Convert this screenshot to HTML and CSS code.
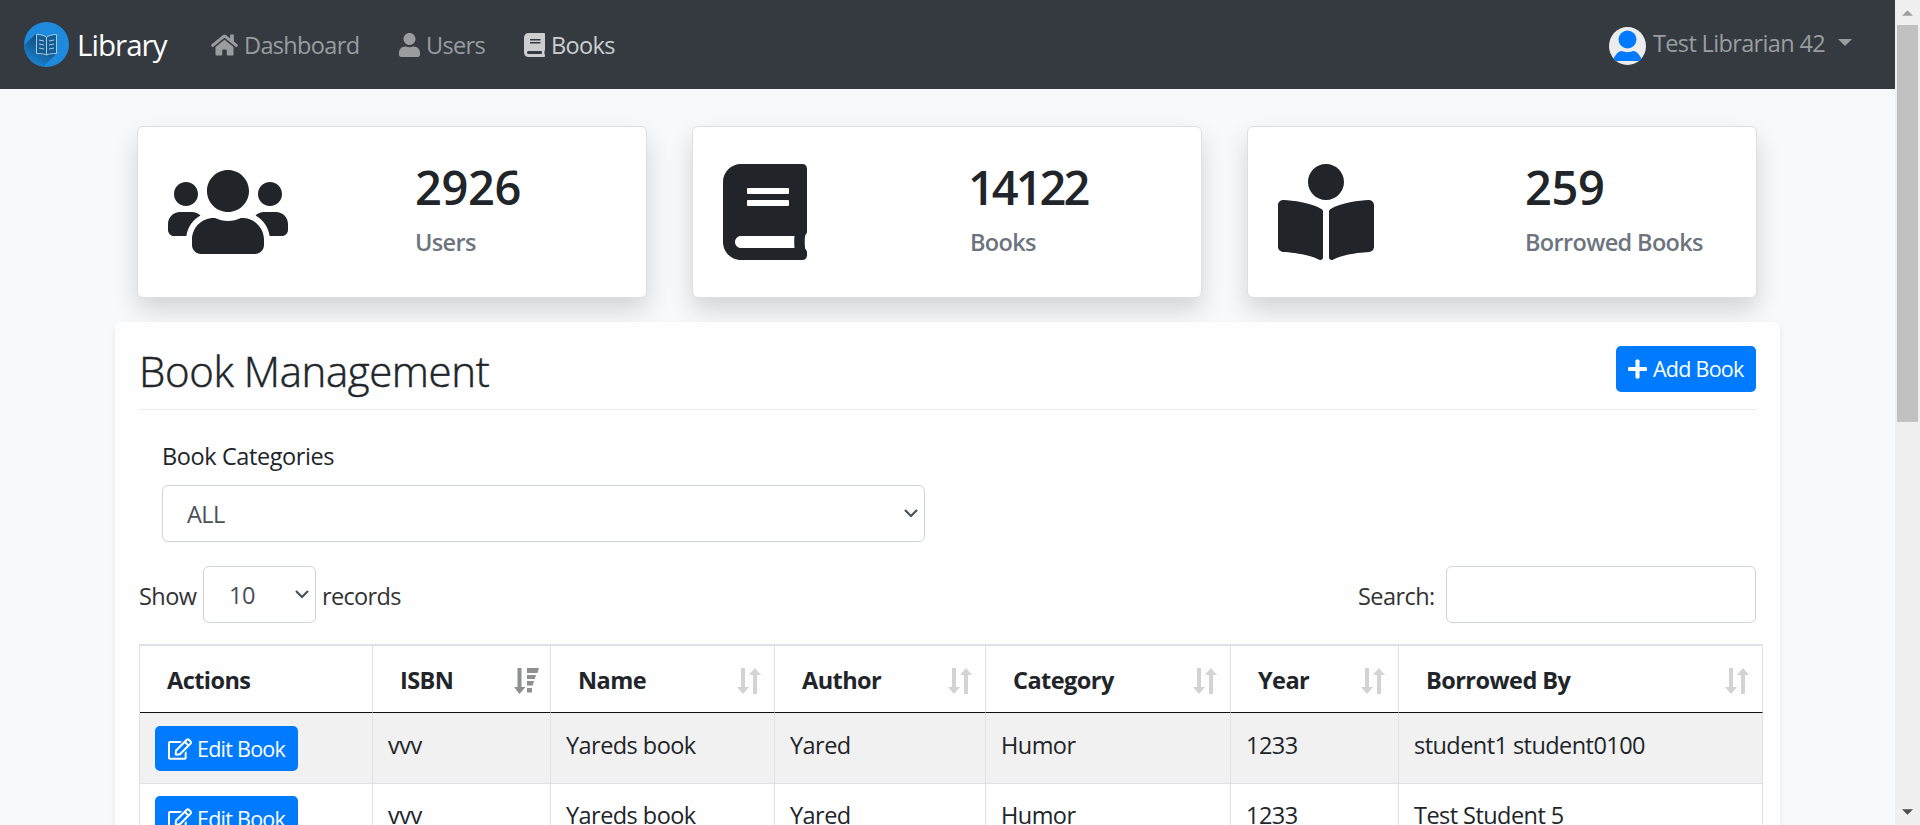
FILE: index.html
```html
<!DOCTYPE html>
<html lang="en">
<head>
<meta charset="utf-8">
<title>Library - Book Management</title>
<link rel="stylesheet" href="styles.css">
</head>
<body>
<svg class="defs" width="0" height="0" aria-hidden="true">
  <symbol id="book" viewBox="0 0 448 512"><path d="M448 360V24c0-13.300-10.700-24-24-24H96C43 0 0 43 0 96v320c0 53 43 96 96 96h328c13.300 0 24-10.700 24-24v-16c0-7.500-3.500-14.300-8.900-18.700-4.200-15.400-4.200-59.300 0-74.700 5.400-4.300 8.900-11.100 8.900-18.600zM128 134c0-3.300 2.700-6 6-6h212c3.300 0 6 2.700 6 6v20c0 3.300-2.700 6-6 6H134c-3.300 0-6-2.700-6-6v-20zm0 64c0-3.300 2.700-6 6-6h212c3.300 0 6 2.700 6 6v20c0 3.300-2.700 6-6 6H134c-3.300 0-6-2.700-6-6v-20zm253.400 250H96c-17.700 0-32-14.300-32-32 0-17.600 14.400-32 32-32h285.400c-1.900 17.100-1.900 46.900 0 64z"/></symbol>
  <symbol id="user" viewBox="0 0 448 512"><path d="M224 256c70.700 0 128-57.300 128-128S294.700 0 224 0 96 57.300 96 128s57.300 128 128 128zm89.600 32h-16.700c-22.200 10.200-46.900 16-72.900 16s-50.600-5.800-72.900-16h-16.700C60.200 288 0 348.200 0 422.400V464c0 26.500 21.500 48 48 48h352c26.500 0 48-21.500 48-48v-41.600c0-74.200-60.200-134.400-134.400-134.400z"/></symbol>
  <symbol id="home" viewBox="0 0 576 512"><path d="M280.370 148.260L96 300.110V464a16 16 0 0 0 16 16l112.060-.29a16 16 0 0 0 15.920-16V368a16 16 0 0 1 16-16h64a16 16 0 0 1 16 16v95.640a16 16 0 0 0 16 16.050L464 480a16 16 0 0 0 16-16V300L295.670 148.260a12.190 12.190 0 0 0-15.300 0zM571.600 251.470L488 182.560V44.050a12 12 0 0 0-12-12h-56a12 12 0 0 0-12 12v72.610L318.470 43a48 48 0 0 0-61 0L4.340 251.470a12 12 0 0 0-1.600 16.900l25.500 31A12 12 0 0 0 45.150 301l235.220-193.740a12.190 12.190 0 0 1 15.300 0L530.900 301a12 12 0 0 0 16.900-1.600l25.500-31a12 12 0 0 0-1.700-16.930z"/></symbol>
  <symbol id="users" viewBox="0 0 640 512"><path d="M96 224c35.300 0 64-28.700 64-64s-28.700-64-64-64-64 28.700-64 64 28.700 64 64 64zm448 0c35.300 0 64-28.700 64-64s-28.700-64-64-64-64 28.700-64 64 28.700 64 64 64zm32 32h-64c-17.600 0-33.500 7.100-45.100 18.600 40.300 22.100 68.900 62 75.100 109.400h66c17.700 0 32-14.300 32-32v-32c0-35.300-28.700-64-64-64zm-256 0c61.900 0 112-50.100 112-112S381.900 32 320 32 208 82.100 208 144s50.100 112 112 112zm76.800 32h-8.300c-20.800 10-43.900 16-68.500 16s-47.600-6-68.500-16h-8.300C179.600 288 128 339.600 128 403.200V432c0 26.500 21.500 48 48 48h288c26.500 0 48-21.500 48-48v-28.800c0-63.600-51.600-115.200-115.200-115.200zm-223.700-13.400C161.500 263.100 145.600 256 128 256H64c-35.300 0-64 28.700-64 64v32c0 17.700 14.300 32 32 32h65.900c6.300-47.400 34.900-87.300 75.200-109.400z"/></symbol>
  <symbol id="reader" viewBox="0 0 512 512"><path d="M352 96c0-53.020-42.980-96-96-96s-96 42.980-96 96 42.980 96 96 96 96-42.980 96-96zM233.590 241.100c-59.330-36.320-155.430-46.300-203.790-49.050C13.550 191.130 0 203.510 0 219.140v222.800c0 14.330 11.590 26.280 26.490 27.050 43.660 2.290 131.990 10.680 193.040 41.430 9.370 4.720 20.480-1.710 20.480-11.870V252.560c-.01-4.670-2.320-8.950-6.420-11.460zm248.610-49.050c-48.350 2.740-144.460 12.730-203.780 49.050-4.100 2.510-6.410 6.960-6.410 11.630v245.790c0 10.190 11.140 16.630 20.540 11.900 61.040-30.720 149.320-39.110 192.970-41.400 14.900-.78 26.490-12.730 26.490-27.060V219.140c-.01-15.630-13.560-28.010-29.810-27.090z"/></symbol>
  <symbol id="edit" viewBox="0 0 576 512"><path d="M402.300 344.900l32-32c5-5 13.700-1.500 13.700 5.700V464c0 26.500-21.500 48-48 48H48c-26.500 0-48-21.500-48-48V112c0-26.500 21.500-48 48-48h273.500c7.100 0 10.700 8.600 5.700 13.700l-32 32c-1.500 1.500-3.500 2.300-5.700 2.300H48v352h352V350.500c0-2.100.8-4.100 2.300-5.600zm156.600-201.800L296.300 405.700l-90.400 10c-26.200 2.900-48.500-19.200-45.600-45.600l10-90.400L432.900 17.100c22.900-22.900 59.900-22.900 82.700 0l43.200 43.200c22.900 22.900 22.900 60 .1 82.800zM460.100 174L402 115.900 216.200 301.800l-7.300 65.300 65.300-7.300L460.100 174zm64.800-79.700l-43.200-43.200c-4.100-4.100-10.800-4.100-14.800 0L436 82l58.100 58.100 30.900-30.900c4-4.200 4-10.800-.1-14.900z"/></symbol>
  <symbol id="plus" viewBox="0 0 448 512"><path d="M416 208H272V64c0-17.670-14.330-32-32-32h-32c-17.670 0-32 14.330-32 32v144H32c-17.670 0-32 14.330-32 32v32c0 17.670 14.330 32 32 32h144v144c0 17.670 14.330 32 32 32h32c17.670 0 32-14.330 32-32V304h144c17.670 0 32-14.330 32-32v-32c0-17.670-14.330-32-32-32z"/></symbol>
  <symbol id="sort" viewBox="0 0 24 26"><path d="M4 0h4v19h4L6 26 0 19h4zM16 26h4V7h4L18 0l-6 7h4z"/></symbol>
  <symbol id="sorted" viewBox="0 0 25 26"><path d="M3.500 0h4v19h4l-6 7-5.500-7h3.500zM13 0h12l-1.500 5H13zM13 7h9l-1.200 4H13zM13 13h7l-1.200 4.500H13zM13 20h5v4.500h-5z"/></symbol>
</svg>
<div class="window">
  <div class="page">
    <nav class="navbar">
      <a class="brand">
        <svg class="logo" viewBox="0 0 45 45">
          <defs><clipPath id="disc"><circle cx="22.500" cy="22.500" r="22.500"/></clipPath>
          <linearGradient id="cast" x1="0.700" y1="0.200" x2="0.300" y2="0.900"><stop offset="0" stop-color="#0f4a78"/><stop offset="1" stop-color="#1b83d0"/></linearGradient></defs>
          <circle cx="22.500" cy="22.500" r="22.500" fill="#1e8add"/>
          <path clip-path="url(#disc)" fill="url(#cast)" d="M12 12L33 31 18 46H0V23z"/>
          <path fill="#155c93" d="M12 12l10.500 3L33 12v19.500l-10.500 2-10.500-2z"/>
          <path fill="none" stroke="#a9cbe6" stroke-width="1" d="M12.500 12.500c5 0 8 1 10 3 2-2 5-3 10-3v19c-5 0-8 .5-10 1.500-2-1-5-1.500-10-1.500zM22.500 15.500V33M15 18l5 1M15 22l5 1M15 26l5 1M30 18l-5 1M30 22l-5 1M30 26l-5 1"/>
        </svg>
        <span class="brand-name">Library</span>
      </a>
      <a class="nav-link link-dashboard"><svg class="icon-home"><use href="#home"/></svg><span>Dashboard</span></a>
      <a class="nav-link link-users"><svg class="icon-nav"><use href="#user"/></svg><span>Users</span></a>
      <a class="nav-link active"><svg class="icon-nav"><use href="#book"/></svg><span>Books</span></a>
      <a class="account">
        <svg class="avatar" viewBox="0 0 37 38"><defs><clipPath id="face"><ellipse cx="18.500" cy="19" rx="18.500" ry="19"/></clipPath></defs><g clip-path="url(#face)"><path fill="#ececec" d="M0 0h37v38H0z"/><circle cx="18.500" cy="12.500" r="9" fill="#007bff"/><path fill="#007bff" d="M4 34c1-5 5-10 9-10 3 1.500 8 1.500 11 0 4 0 8 5 9 10z"/></g></svg>
        <span class="account-name">Test Librarian 42</span>
        <span class="caret"></span>
      </a>
    </nav>

    <section class="stats">
      <div class="card"><div class="card-icon"><svg class="icon-wide"><use href="#users"/></svg></div><div><div class="count">2926</div><div class="card-label">Users</div></div></div>
      <div class="card"><div class="card-icon"><svg class="icon-book"><use href="#book"/></svg></div><div><div class="count count-tight">14122</div><div class="card-label">Books</div></div></div>
      <div class="card"><div class="card-icon"><svg class="icon-square"><use href="#reader"/></svg></div><div><div class="count">259</div><div class="card-label">Borrowed Books</div></div></div>
    </section>

    <main class="panel">
      <header class="panel-head">
        <h1 class="title">Book Management</h1>
        <a class="btn btn-add"><svg class="icon-plus"><use href="#plus"/></svg><span>Add Book</span></a>
      </header>
      <div class="filter">
        <label class="filter-label">Book Categories</label>
        <div class="select select-category"><span>ALL</span><svg class="chevron" viewBox="0 0 14 9"><path d="M1 1l6 6 6-6"/></svg></div>
      </div>
      <div class="controls">
        <span class="text-show">Show</span>
        <div class="select select-count"><span>10</span><svg class="chevron" viewBox="0 0 14 9"><path d="M1 1l6 6 6-6"/></svg></div>
        <span class="text-records">records</span>
        <span class="text-search">Search:</span>
        <div class="search"></div>
      </div>
      <table class="books">
        <colgroup><col class="c1"><col class="c2"><col class="c3"><col class="c4"><col class="c5"><col class="c6"><col class="c7"></colgroup>
        <thead>
          <tr>
            <th><div class="head">Actions</div></th>
            <th><div class="head">ISBN<svg class="sort sorted"><use href="#sorted"/></svg></div></th>
            <th><div class="head">Name<svg class="sort"><use href="#sort"/></svg></div></th>
            <th><div class="head">Author<svg class="sort"><use href="#sort"/></svg></div></th>
            <th><div class="head">Category<svg class="sort"><use href="#sort"/></svg></div></th>
            <th><div class="head">Year<svg class="sort"><use href="#sort"/></svg></div></th>
            <th><div class="head">Borrowed By<svg class="sort"><use href="#sort"/></svg></div></th>
          </tr>
        </thead>
        <tbody>
          <tr>
            <td class="action"><a class="btn btn-edit"><svg class="icon-edit"><use href="#edit"/></svg><span>Edit Book</span></a></td>
            <td>vvv</td><td>Yareds book</td><td>Yared</td><td>Humor</td><td>1233</td><td>student1 student0100</td>
          </tr>
          <tr>
            <td class="action"><a class="btn btn-edit"><svg class="icon-edit"><use href="#edit"/></svg><span>Edit Book</span></a></td>
            <td>vvv</td><td>Yareds book</td><td>Yared</td><td>Humor</td><td>1233</td><td>Test Student 5</td>
          </tr>
        </tbody>
      </table>
    </main>
  </div>
  <aside class="scrollbar">
    <svg class="arrow arrow-up" viewBox="0 0 12 6"><path d="M0 6L6 0l6 6z"/></svg>
    <div class="thumb"></div>
    <svg class="arrow arrow-down" viewBox="0 0 12 6"><path d="M0 0h12L6 6z"/></svg>
  </aside>
</div>
</body>
</html>
```
FILE: styles.css
```css
* { box-sizing: border-box; }
body {
  margin: 0;
  overflow: hidden;
  background: #f8f9fa;
  color: #212529;
  font: 400 23.5px/36px "Open Sans", "Noto Sans", sans-serif;
  letter-spacing: -0.55px;
}
svg { display: block; flex: none; fill: currentColor; }
.defs { position: absolute; }
span { white-space: nowrap; }

.window { display: flex; width: 1920px; height: 825px; overflow: hidden; }
.page { width: 1895px; height: 825px; overflow: hidden; }

.navbar {
  display: flex;
  align-items: center;
  height: 89px;
  padding: 0 43px 0 24px;
  background: #343a40;
  color: #9a9da0;
}
.brand { display: flex; align-items: center; width: 187px; color: #fff; }
.logo { width: 45px; height: 45px; margin-right: 8px; }
.brand-name { font-size: 29.5px; letter-spacing: -0.95px; margin-top: 1px; }
.nav-link { display: flex; align-items: center; letter-spacing: -0.65px; }
.link-dashboard { width: 188px; }
.link-users { width: 125px; }
.nav-link.active { color: #cccecf; }
.icon-home { width: 27px; height: 24px; margin-right: 6px; }
.icon-nav { width: 21px; height: 24px; margin-right: 6px; }
.account { display: flex; align-items: center; margin-left: auto; letter-spacing: -0.65px; }
.avatar { width: 37px; height: 38px; margin-right: 7px; margin-top: 3px; }
.account-name { margin-bottom: 3px; width: 171px; }
.caret {
  margin: 0 0 4px 14px;
  border: 7px solid transparent;
  border-top-color: #9a9da0;
  border-bottom: 0;
}

.stats { display: grid; grid-template-columns: repeat(3, 510px); gap: 45px; padding: 37px 0 0 137px; }
.card {
  display: grid;
  grid-template-columns: 247px 1fr;
  height: 172px;
  padding: 30px 0 0 30px;
  background: #fff;
  border: 1px solid #dfdfdf;
  border-radius: 6px;
  box-shadow: 0 12px 24px rgba(0, 0, 0, .15);
}
.card-icon { padding-top: 7px; }
.icon-wide { width: 120px; height: 96px; }
.icon-book { width: 84px; height: 96px; }
.icon-square { width: 96px; height: 96px; }
.count { padding-top: 1px; font-size: 47px; font-weight: 600; line-height: 58px; letter-spacing: -0.4px; }
.count-tight { margin-left: -2px; letter-spacing: -3px; }
.card-label { margin-top: 8px; color: #6c757d; font-weight: 600; letter-spacing: -0.65px; }

.panel {
  position: relative;
  width: 1665px;
  height: 560px;
  margin: 24px 0 0 115px;
  padding: 24px 24px 0;
  background: rgba(255, 255, 255, .85);
  border-radius: 6px;
  box-shadow: 0 3px 6px rgba(0, 0, 0, .075);
}
.panel-head { display: flex; justify-content: space-between; height: 64px; border-bottom: 1px solid #e9ebed; }
.title { margin: 0; font-size: 42px; font-weight: 300; line-height: 50px; letter-spacing: -0.4px; -webkit-text-stroke: 0.5px #212529; }
.btn { display: flex; align-items: center; background: #007bff; color: #fff; border-radius: 5px; font-size: 21.5px; letter-spacing: -0.75px; }
.btn-add { width: 140px; height: 46px; padding: 0 0 1px 12px; }
.icon-plus { width: 19px; height: 22px; margin-right: 6px; }
.filter { padding: 28px 0 0 23px; }
.filter-label { display: block; letter-spacing: -0.4px; }
.select {
  display: flex;
  align-items: center;
  justify-content: space-between;
  height: 57px;
  color: #495057;
  background: #fff;
  border: 1px solid #ced4da;
  border-radius: 6px;
}
.select-category { width: 763px; margin-top: 11px; padding: 0 6px 0 24px; }
.select-count { width: 113px; padding: 0 6px 0 25px; }
.chevron { width: 14px; height: 9px; fill: none; stroke: #495057; stroke-width: 2.2; }
.controls { display: flex; align-items: center; margin-top: 24px; color: #333; }
.text-show { width: 64px; padding-top: 3px; }
.text-records { margin-left: 6px; padding-top: 3px; letter-spacing: -0.65px; }
.text-search { margin-left: auto; width: 88px; padding-top: 3px; }
.search { width: 310px; height: 57px; background: #fff; border: 1px solid #ced4da; border-radius: 6px; }

.books { width: 1624px; margin-top: 21px; table-layout: fixed; border-spacing: 0; border-left: 1px solid #dee2e6; border-top: 2px solid #dee2e6; }
.c1 { width: 233px; }
.c2 { width: 178px; }
.c3 { width: 224px; }
.c4 { width: 211px; }
.c5 { width: 245px; }
.c6 { width: 168px; }
.c7 { width: 364px; }
th { height: 67px; padding: 1px 13px 0 27px; border-right: 1px solid #dee2e6; border-bottom: 1px solid #111; text-align: left; font-weight: 700; }
.head { display: flex; align-items: center; justify-content: space-between; white-space: nowrap; }
.sort { width: 24px; height: 26px; margin-top: 3px; color: #d3d3d3; }
.sorted { width: 25px; margin-right: -2px; color: #8e8f90; }
td { height: 70px; padding: 13px 15px 0; border-right: 1px solid #dee2e6; vertical-align: top; white-space: nowrap; }
tbody tr:first-child td { background: #f1f1f1; padding-top: 14px; }
tbody tr + tr td { border-top: 1px solid #dee2e6; }
tbody tr:first-child .action { padding-top: 13px; }
tbody .action { padding-top: 12px; }
.btn-edit { width: 143px; height: 45px; padding-left: 13px; }
.icon-edit { width: 24px; height: 22px; margin-right: 5px; }

.scrollbar { display: flex; flex-direction: column; align-items: center; width: 25px; height: 825px; background: #f0f0f0; }
.arrow { width: 11px; height: 6px; }
.arrow-up { margin: 10px 0 9px; color: #a0a0a0; }
.arrow-down { margin: auto 0 10px; color: #4d4d4d; }
.thumb { width: 21px; height: 397px; background: #c1c1c1; }
```
